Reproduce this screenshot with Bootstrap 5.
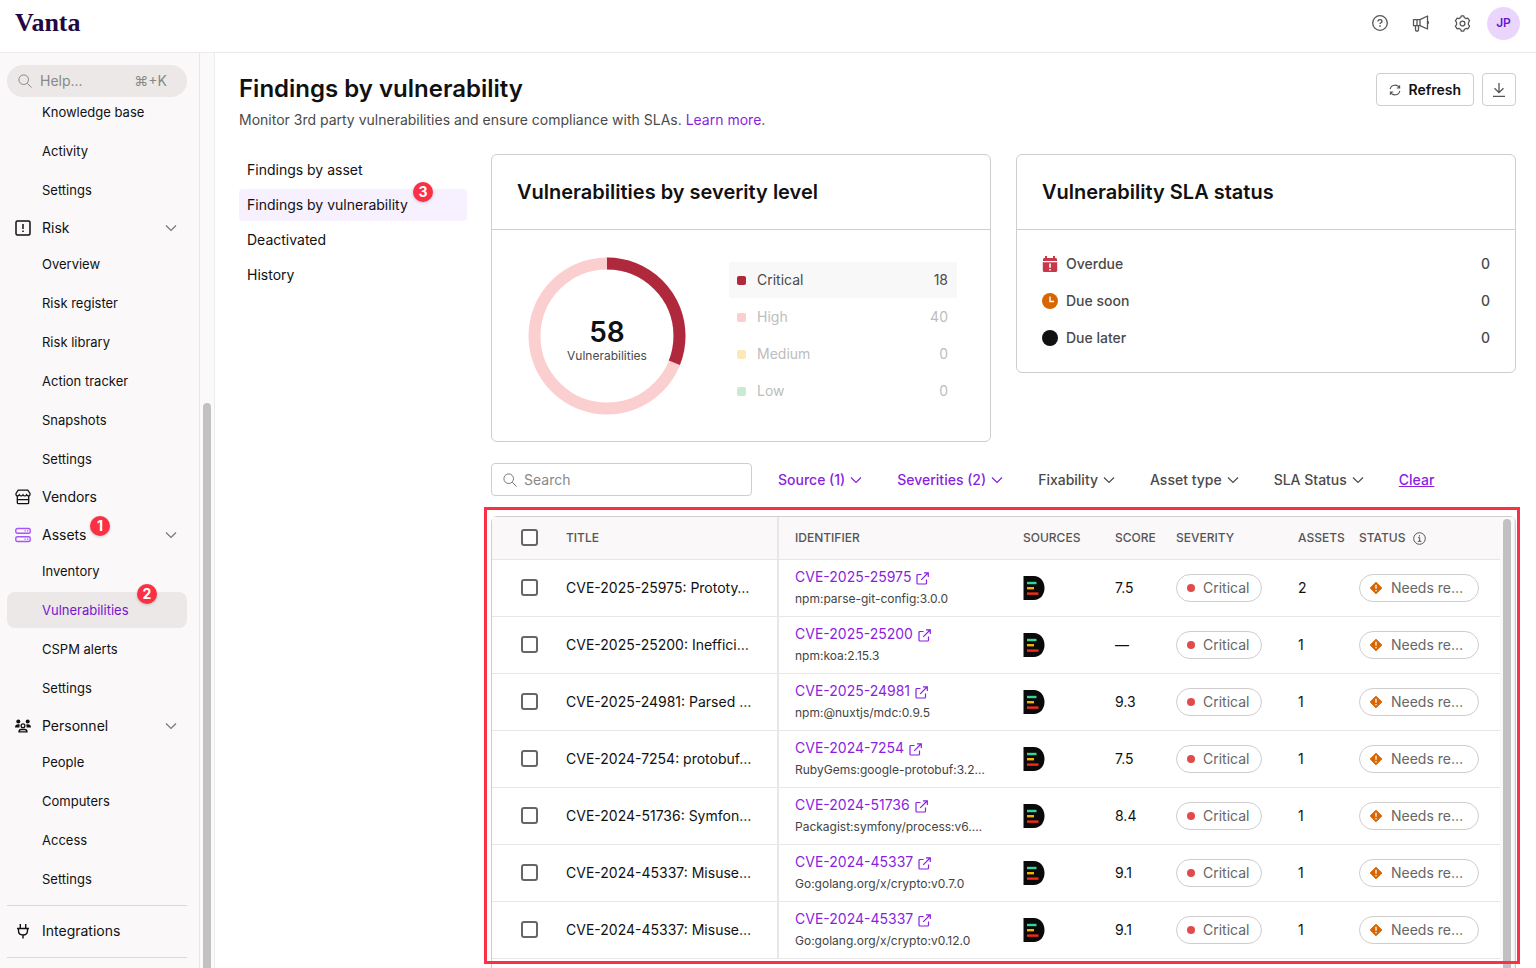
<!DOCTYPE html>
<html lang="en">
<head>
<meta charset="utf-8">
<meta name="viewport" content="width=device-width, initial-scale=1">
<title>Findings by vulnerability</title>
<link rel="stylesheet" href="https://cdn.jsdelivr.net/npm/bootstrap@5.3.0/dist/css/bootstrap.min.css">
<style>
:root{--ink:#111;--body:#4a4a4a;--muted:#666;--line:#cfcdce;--soft:#e9e6e7;--purple:#8a1fe0;--red:#fb3045;--panel:#faf8f9}
body{font:14px/20px Inter,"Liberation Sans",sans-serif;color:var(--ink);background:#fff}
svg{flex:none;fill:none;stroke:currentColor}
svg.solid{stroke:none}
a{color:inherit;text-decoration:none}
.i16{width:16px;height:16px}
.chev{width:12px;height:12px}
.topbar{height:53px;border-bottom:1px solid #efe8eb;padding:0 16px 6px 15px;color:#555}
.brand{font:700 26px/32px "Liberation Serif",serif;color:#240642}
.topbar button{color:inherit}
.avatar{width:33px;height:33px;background:#ead6fc;color:#6b16c9!important;font-size:12px;font-weight:600}
.side{width:200px;flex:none;background:var(--panel);border-right:1px solid var(--soft);padding:12px 12px 0 7px}
.help{height:32px;border-radius:16px;background:#ebe8e7;color:#888;padding:0 20px 0 10px;gap:7px;position:relative;z-index:1}
.help input{border:0;background:none;min-width:0;width:0;flex:1;padding:0;color:#888;outline:0}
input::placeholder{color:#888;opacity:1}
.tree{margin-top:-3px;gap:2px}
.tree ul{gap:3px}
.tree a{height:36px;padding:0 10px 0 8px;border-radius:8px;position:relative;display:flex;align-items:center}
.tree ul a{padding-left:35px;font-size:13px}
.tree .head{gap:11px}
.tree .chev{margin-left:auto;color:#777}
.tree a.current{background:#ebe8e7;color:#7716cf}
.tree hr{margin:6px 0 5px;border-color:#dcd8d9;opacity:1}
.lilac{color:#a855f7}
.step{position:absolute;width:20px;height:20px;border-radius:50%;background:var(--red);color:#fff;font-size:14px;font-weight:700;line-height:20px;text-align:center;box-shadow:0 1px 3px #0003}
.step-1{left:83px;top:-1px}.step-2{left:130px;top:-8px}.step-3{left:174px;top:-7px}
.rail{width:15px;flex:none;background:#fafafa;border-right:1px solid #ececec;display:flex;justify-content:center}
.rail span{width:8px;border-radius:4px 4px 0 0;background:#c1c1c1}
.rail-side span{margin-top:350px}
.rail-table span{margin-top:2px}
.page{padding:20px 20px 0 24px}
h1{font-size:24px;font-weight:600;line-height:32px}
h2{font-size:20px;font-weight:600;line-height:24px}
.lede{color:var(--body);margin:5px 0 24px}
.lede a{color:var(--purple)}
.tool{height:33px;border:1px solid var(--line);border-radius:4px;background:#fff;color:#555}
.tool b{font-weight:600;color:var(--ink)}
.refresh{padding:0 12px 0 11px;gap:7px;margin-right:8px}
.tabs{width:228px;flex:none;gap:3px}
.tabs a{height:32px;padding:0 8px;border-radius:4px;position:relative;display:flex;align-items:center}
.tabs a.current{background:#f6f0ff}
.split{gap:24px}
.cards{--bs-gutter-x:25px}
.card{border-color:var(--line);border-radius:6px}
.card-header{background:none;border-color:var(--line);padding:25px}
.chart-body{height:211px;padding:0 33px 0 36px;gap:43px}
.donut{width:158px;height:158px}
.total{font-size:28px;font-weight:600;line-height:32px}
.total-label{font-size:12px;line-height:16px;color:var(--body)}
.legend{gap:1px;color:#bdbdbd}
.legend li{height:36px;padding:0 9px 0 8px}
.legend .on{background:#f8f8f8;color:var(--body)}
.swatch{width:9px;height:9px;border-radius:2px;margin-right:11px}
.sla{padding:16px 25px;gap:1px;color:var(--body);font-weight:500}
.sla li{height:36px;gap:8px}
.filters{margin:21px 0 20px;gap:35px}
.filters button{gap:5px;font-size:14px;line-height:20px;font-weight:500;color:var(--body)}
.filters .picked,.filters a{color:var(--purple);font-weight:500}
.find{width:261px;height:33px;border:1px solid var(--line);border-radius:4px;padding:0 10px;gap:6px;margin-right:-9px;color:#777}
.find input{border:0;outline:0;padding:0;width:100%;background:none}
.grid-wrap{border:1px solid var(--line);border-bottom:0;border-radius:6px 6px 0 0}
.outline{position:absolute;inset:-10px -5px 4px -8px;border:3px solid var(--red);pointer-events:none}
.vulns{table-layout:fixed;margin:0;--bs-table-bg:transparent;color:var(--ink)}
.vulns th,.vulns td{height:57px;padding:0 0 0 16px;border-bottom:1px solid var(--soft);vertical-align:middle;white-space:nowrap}
.vulns th{height:42px;background:var(--panel);font-size:12px;font-weight:500;color:#555}
.vulns th:first-child,.vulns td:first-child{padding-left:29px}
.vulns th:nth-child(2),.vulns td:nth-child(2){border-right:2px solid var(--soft);padding-left:17px}
.w-check{width:57px}.w-sources{width:92px}.w-score,.w-assets{width:61px}.w-sev{width:122px}.w-status{width:157px}
.tick{appearance:none;width:17px;height:17px;border:2px solid #666;border-radius:3px;margin:0;display:block;background:#fff}
.cve{color:var(--purple);gap:5px;line-height:20px}
.cve svg{width:13px;height:13px;margin-top:3px}
.pkg{font-size:12px;line-height:20px;color:#444;margin-top:2px;overflow:hidden;text-overflow:ellipsis}
.src{width:22px;height:24px;display:block}
.chip{height:28px;border:1px solid var(--line);border-radius:14px;color:var(--muted);width:86px;padding-left:10px;gap:8px}
.chip.wide{width:120px;padding-left:8px;gap:7px}
.dot{width:8px;height:8px;border-radius:50%;background:#e24b4b}
</style>
</head>
<body class="vh-100 d-flex flex-column overflow-hidden">
<svg class="d-none" aria-hidden="true">
<symbol id="chev" viewBox="0 0 12 12"><path d="M1 3.500 6 8.500l5-5" stroke-width="1.200"/></symbol>
<symbol id="lens" viewBox="0 0 16 16"><circle cx="6.700" cy="6.700" r="4.800"/><path d="m10.300 10.300 4.200 4.200"/></symbol>
<symbol id="ext" viewBox="0 0 13 13"><path d="M5.500 2.500H2a1 1 0 0 0-1 1V11a1 1 0 0 0 1 1h7.500a1 1 0 0 0 1-1V7.500M8 .8h4.300V5M12 1 5.200 7.800" stroke-width="1.200"/></symbol>
<symbol id="src" viewBox="0 0 22 24"><path d="M.5 0H11c6 0 10.500 5 10.500 12S17 24 11 24H.5z" fill="#0a0a0a" stroke="none"/><path d="M4 7h9.500" stroke="#35d59a" stroke-width="2.400"/><path d="M4 12.200h7" stroke="#f5b000" stroke-width="2.400"/><path d="M4 17.600h11.500" stroke="#f52b18" stroke-width="2.400"/></symbol>
<symbol id="warn" viewBox="0 0 16 16"><path d="M8 2.200 13.800 8 8 13.800 2.200 8z" fill="#d96500" stroke="#d96500" stroke-linejoin="round"/><path d="M8 4.800v4M8 9.900v1.400" stroke="#fff" stroke-width="1.300"/></symbol>
</svg>

<header class="topbar d-flex align-items-center flex-shrink-0">
  <a class="brand me-auto" href="#">Vanta</a>
  <div class="d-flex align-items-center">
    <button class="btn p-0 border-0 d-flex me-4" aria-label="Help"><svg class="i16" viewBox="0 0 16 16" stroke-width="1.300"><circle cx="8" cy="8" r="7.300"/><path d="M6 6.500C6 5.300 6.800 4.700 8 4.700s2 .7 2 1.700c0 1.300-2 1.400-2 2.600"/><path d="M8 10.300v1.400" stroke-width="1.500"/></svg></button>
    <button class="btn p-0 border-0 d-flex me-4" aria-label="Announcements"><svg width="18" height="17" viewBox="0 0 18 17" stroke-width="1.300"><path d="M1.500 4.700H8v6H1.500zM5 4.700v6M8 4.700 15.500 1v13L8 10.700M3.500 10.700V15c0 .7.300 1 1 1h1c.7 0 1-.3 1-1v-4.300M15.500 6c1.200.2 1.200 2.800 0 3" stroke-linejoin="round"/></svg></button>
    <button class="btn p-0 border-0 d-flex me-3" aria-label="Preferences"><svg width="17" height="17" viewBox="0 0 16 16" stroke-width="1.200"><path d="m6.300 2.400.5-1.500h2.400l.5 1.500 1.700 1 1.600-.4 1.700 2.600-1.100 1.300v2.200l1.100 1.300-1.700 2.600-1.600-.4-1.700 1-.5 1.500H6.800l-.5-1.500-1.700-1-1.600.4-1.700-2.600 1.100-1.300V6.900L1.300 5.600 3 3l1.600.4z" stroke-linejoin="round"/><circle cx="8" cy="8" r="2.300"/></svg></button>
    <button class="avatar btn p-0 border-0 rounded-circle">JP</button>
  </div>
</header>

<div class="d-flex flex-grow-1 overflow-hidden">
  <aside class="side overflow-hidden">
    <label class="help d-flex align-items-center"><svg class="i16" viewBox="0 0 16 16"><use href="#lens"/></svg><input type="text" placeholder="Help..." aria-label="Help"><span>⌘+K</span></label>
    <nav class="tree d-flex flex-column">
      <ul class="list-unstyled d-flex flex-column m-0">
        <li><a href="#">Knowledge base</a></li><li><a href="#">Activity</a></li><li><a href="#">Settings</a></li>
      </ul>
      <div>
        <a class="head" href="#"><svg class="i16" viewBox="0 0 16 16" stroke-width="1.500"><rect x="1" y="1" width="14" height="14" rx="1.500"/><path d="M8 4v5M8 10.400V12"/></svg>Risk<svg class="chev"><use href="#chev"/></svg></a>
        <ul class="list-unstyled d-flex flex-column m-0">
          <li><a href="#">Overview</a></li><li><a href="#">Risk register</a></li><li><a href="#">Risk library</a></li><li><a href="#">Action tracker</a></li><li><a href="#">Snapshots</a></li><li><a href="#">Settings</a></li>
        </ul>
      </div>
      <a class="head" href="#"><svg class="i16" viewBox="0 0 16 16" stroke-width="1.300"><path d="M3.200 1.200h9.600L15 4.500c.3 1.500-.5 2.400-1.600 2.400-1 0-1.500-.7-1.800-1.200-.4.700-1 1.200-1.800 1.200S8.400 6.400 8 5.700c-.4.700-1 1.200-1.800 1.200s-1.400-.5-1.800-1.200C4.100 6.200 3.600 6.900 2.600 6.900 1.500 6.900.7 6 1 4.500zM2.300 7v6.500c0 .7.500 1.200 1.200 1.200h9c.7 0 1.200-.5 1.200-1.200V7M2.300 10.700h11.400"/></svg>Vendors</a>
      <div>
        <a class="head" href="#"><svg class="i16 lilac" viewBox="0 0 16 16" stroke-width="1.400"><rect x=".8" y="1.500" width="14.400" height="4.800" rx="1.500"/><rect x=".8" y="9.700" width="14.400" height="4.800" rx="1.500"/><path d="M9.500 3.900h1.200M12 3.900h1.200M9.500 12.100h1.200M12 12.100h1.200"/></svg>Assets<svg class="chev"><use href="#chev"/></svg><span class="step step-1">1</span></a>
        <ul class="list-unstyled d-flex flex-column m-0">
          <li><a href="#">Inventory</a></li><li><a class="current" href="#">Vulnerabilities<span class="step step-2">2</span></a></li><li><a href="#">CSPM alerts</a></li><li><a href="#">Settings</a></li>
        </ul>
      </div>
      <div>
        <a class="head" href="#"><svg class="i16 solid" viewBox="0 0 16 16"><g fill="currentColor"><circle cx="3.300" cy="3.500" r="2"/><circle cx="12.700" cy="3.500" r="2"/><path d="M0 9.500C0 7.300 1.300 6.300 3.200 6.300c.8 0 1.400.2 1.800.5-.6.800-.7 1.800-.5 2.700zM16 9.500c0-2.200-1.300-3.200-3.200-3.200-.8 0-1.400.2-1.800.5.600.8.700 1.800.5 2.700z"/></g><g stroke="currentColor" stroke-width="1.300"><circle cx="8" cy="7.700" r="1.900"/><path d="M4 13.800c0-1.600 1-2.300 2.200-2.300h3.600c1.200 0 2.200.7 2.200 2.300z"/></g></svg>Personnel<svg class="chev"><use href="#chev"/></svg></a>
        <ul class="list-unstyled d-flex flex-column m-0">
          <li><a href="#">People</a></li><li><a href="#">Computers</a></li><li><a href="#">Access</a></li><li><a href="#">Settings</a></li>
        </ul>
      </div>
      <hr><a class="head" href="#"><svg class="i16" viewBox="0 0 16 16" stroke-width="1.400"><path d="M2 5.500h12M5.300 1v4M10.700 1v4M3.500 5.500v2.300c0 2.600 1.800 4.200 4.500 4.200s4.500-1.600 4.500-4.200V5.500M8 12v3.500"/></svg>Integrations</a><hr>
    </nav>
  </aside>
  <div class="rail rail-side"><span></span></div>

  <main class="page flex-grow-1 d-flex flex-column overflow-hidden">
    <div class="d-flex align-items-start">
      <div class="me-auto"><h1 class="m-0">Findings by vulnerability</h1>
      <p class="lede">Monitor 3rd party vulnerabilities and ensure compliance with SLAs. <a href="#">Learn more</a>.</p></div>
      <button class="tool refresh d-flex align-items-center"><svg width="14" height="14" viewBox="0 0 16 16" stroke-width="1.200"><path d="M2.500 7A5.600 5.600 0 0 1 13 5.500M13.500 9A5.600 5.600 0 0 1 3 10.500M13.300 2.500v3.300H10M2.700 13.500v-3.300H6"/></svg><b>Refresh</b></button>
      <button class="tool d-flex align-items-center justify-content-center px-2" aria-label="Download"><svg class="i16" viewBox="0 0 16 16" stroke-width="1.300"><path d="M8 1v9.500M3.500 6.200 8 10.700l4.500-4.500M2 14.300h12"/></svg></button>
    </div>
    <div class="split d-flex flex-grow-1">
      <nav class="tabs d-flex flex-column">
        <a href="#">Findings by asset</a><a class="current" href="#">Findings by vulnerability<span class="step step-3">3</span></a><a href="#">Deactivated</a><a href="#">History</a>
      </nav>
      <div class="flex-grow-1 d-flex flex-column">
        <div class="row cards align-items-start">
          <div class="col-6"><section class="card">
            <div class="card-header"><h2 class="m-0">Vulnerabilities by severity level</h2></div>
            <div class="chart-body d-flex align-items-center">
              <div class="donut position-relative flex-shrink-0">
                <svg class="donut" viewBox="0 0 158 158" stroke-width="12"><circle cx="79" cy="79" r="72.500" stroke="#fbcfcf"/><circle cx="79" cy="79" r="72.500" stroke="#b0283c" pathLength="58" stroke-dasharray="18 40" transform="rotate(-90 79 79)"/></svg>
                <div class="position-absolute top-0 start-0 w-100 h-100 d-flex flex-column align-items-center justify-content-center pt-2"><span class="total">58</span><span class="total-label">Vulnerabilities</span></div>
              </div>
              <ul class="legend list-unstyled d-flex flex-column flex-grow-1 m-0">
                <li class="on d-flex align-items-center"><svg class="swatch"><rect width="9" height="9" fill="#b0283c" stroke="none"/></svg>Critical<span class="ms-auto">18</span></li>
                <li class="d-flex align-items-center"><svg class="swatch"><rect width="9" height="9" fill="#fbcfcf" stroke="none"/></svg>High<span class="ms-auto">40</span></li>
                <li class="d-flex align-items-center"><svg class="swatch"><rect width="9" height="9" fill="#fde9b8" stroke="none"/></svg>Medium<span class="ms-auto">0</span></li>
                <li class="d-flex align-items-center"><svg class="swatch"><rect width="9" height="9" fill="#c9ead3" stroke="none"/></svg>Low<span class="ms-auto">0</span></li>
              </ul>
            </div>
          </section></div>
          <div class="col-6"><section class="card">
            <div class="card-header"><h2 class="m-0">Vulnerability SLA status</h2></div>
            <ul class="sla list-unstyled d-flex flex-column m-0">
              <li class="d-flex align-items-center"><svg class="i16 solid" viewBox="0 0 16 16"><path d="M1 5V3.500C1 2.600 1.600 2 2.500 2H3V0h2v2h6V0h2v2h.5c.9 0 1.500.6 1.500 1.500V5zM.8 6.200h14.400v8.300c0 .9-.6 1.500-1.500 1.500H2.300c-.9 0-1.500-.6-1.500-1.500z" fill="#c7384b"/><path d="M8 7.500v4.300M8 13v1.500" stroke="#fff" stroke-width="1.600"/></svg>Overdue<span class="ms-auto">0</span></li>
              <li class="d-flex align-items-center"><svg class="i16" viewBox="0 0 16 16"><circle cx="8" cy="8" r="8" fill="#d96500" stroke="none"/><path d="M8 3.500v5h4" stroke="#fff" stroke-width="1.400"/></svg>Due soon<span class="ms-auto">0</span></li>
              <li class="d-flex align-items-center"><svg class="i16" viewBox="0 0 16 16"><circle cx="8" cy="8" r="8" fill="#111" stroke="none"/></svg>Due later<span class="ms-auto">0</span></li>
            </ul>
          </section></div>
        </div>

        <div class="filters d-flex align-items-center">
          <label class="find d-flex align-items-center"><svg class="i16" viewBox="0 0 16 16"><use href="#lens"/></svg><input type="text" placeholder="Search" aria-label="Search"></label>
          <button class="btn p-0 border-0 d-flex align-items-center picked">Source (1)<svg class="chev"><use href="#chev"/></svg></button>
          <button class="btn p-0 border-0 d-flex align-items-center picked">Severities (2)<svg class="chev"><use href="#chev"/></svg></button>
          <button class="btn p-0 border-0 d-flex align-items-center">Fixability<svg class="chev"><use href="#chev"/></svg></button>
          <button class="btn p-0 border-0 d-flex align-items-center">Asset type<svg class="chev"><use href="#chev"/></svg></button>
          <button class="btn p-0 border-0 d-flex align-items-center">SLA Status<svg class="chev"><use href="#chev"/></svg></button>
          <a class="text-decoration-underline" href="#">Clear</a>
        </div>

        <div class="grid-wrap position-relative d-flex flex-grow-1">
          <div class="flex-grow-1">
          <table class="table vulns">
            <colgroup><col class="w-check"><col><col><col class="w-sources"><col class="w-score"><col class="w-sev"><col class="w-assets"><col class="w-status"></colgroup>
            <thead><tr><th><input class="tick" type="checkbox" aria-label="Select all"></th><th>TITLE</th><th>IDENTIFIER</th><th>SOURCES</th><th>SCORE</th><th>SEVERITY</th><th>ASSETS</th><th>STATUS <svg class="ms-1" width="13" height="13" viewBox="0 0 13 13"><circle cx="6.500" cy="6.500" r="5.800"/><path d="M5 5.700h1.700v3.500M4.800 9.300h3.600M6.500 3.200v1.300"/></svg></th></tr></thead>
            <tbody id="rows"></tbody>
          </table>
          </div>
          <div class="rail rail-table"><span></span></div>
          <div class="outline"></div>
        </div>
      </div>
    </div>
  </main>
</div>
<script src="https://cdn.jsdelivr.net/npm/bootstrap@5.3.0/dist/js/bootstrap.bundle.min.js"></script>
<script>
const findings = [
  ["CVE-2025-25975", "Prototy…", "npm:parse-git-config:3.0.0", "7.5", 2],
  ["CVE-2025-25200", "Ineffici…", "npm:koa:2.15.3", "—", 1],
  ["CVE-2025-24981", "Parsed …", "npm:@nuxtjs/mdc:0.9.5", "9.3", 1],
  ["CVE-2024-7254", "protobuf…", "RubyGems:google-protobuf:3.2…", "7.5", 1],
  ["CVE-2024-51736", "Symfon…", "Packagist:symfony/process:v6.…", "8.4", 1],
  ["CVE-2024-45337", "Misuse…", "Go:golang.org/x/crypto:v0.7.0", "9.1", 1],
  ["CVE-2024-45337", "Misuse…", "Go:golang.org/x/crypto:v0.12.0", "9.1", 1]
];
document.getElementById("rows").innerHTML = findings.map(([id, title, pkg, score, assets]) => `<tr>
  <td><input class="tick" type="checkbox" aria-label="Select ${id}"></td>
  <td>${id}: ${title}</td>
  <td><a class="cve d-flex align-items-center" href="#">${id}<svg><use href="#ext"/></svg></a><div class="pkg">${pkg}</div></td>
  <td><svg class="src"><use href="#src"/></svg></td>
  <td>${score}</td>
  <td><span class="chip d-flex align-items-center"><span class="dot"></span>Critical</span></td>
  <td>${assets}</td>
  <td><span class="chip wide d-flex align-items-center"><svg class="i16"><use href="#warn"/></svg>Needs re…</span></td>
</tr>`).join("");
</script>
</body>
</html>
